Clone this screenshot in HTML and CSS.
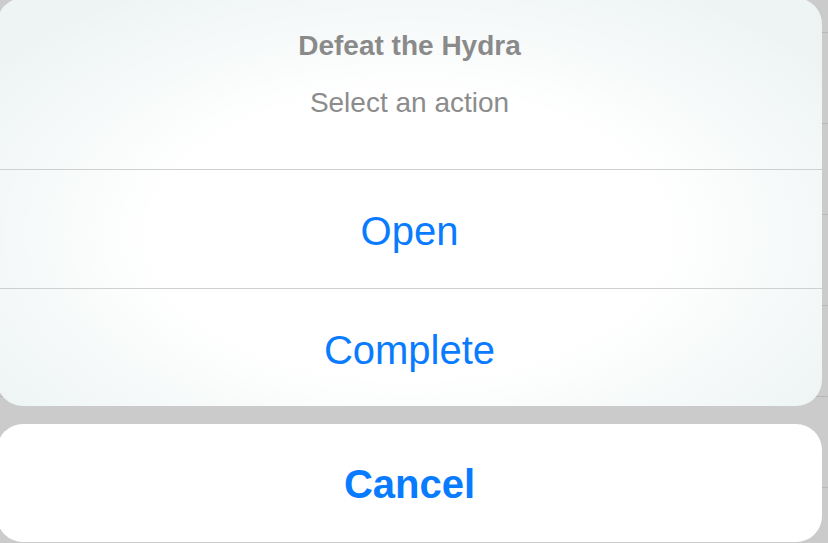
FILE: index.html
```html
<!DOCTYPE html>
<html lang="en">
<head>
<meta charset="utf-8">
<title>Action sheet</title>
<link rel="stylesheet" href="styles.css">
</head>
<body>
<div class="screen">
  <div class="sheet">
    <div class="sheet-header">
      <div class="sheet-title">Defeat the Hydra</div>
      <div class="sheet-message">Select an action</div>
    </div>
    <button class="sheet-action">Open</button>
    <button class="sheet-action">Complete</button>
  </div>
  <button class="cancel">Cancel</button>
</div>
</body>
</html>
```

FILE: styles.css
```css
html, body {
  margin: 0;
  padding: 0;
}
body {
  width: 828px;
  height: 543px;
  overflow: hidden;
  background-color: #cbcbcb;
  background-image: repeating-linear-gradient(to bottom,
    transparent 0, transparent 32px,
    #b8b8b8 32px, #b8b8b8 33px,
    transparent 33px, transparent 91px);
  font-family: "Liberation Sans", Arial, sans-serif;
}
.screen {
  display: flex;
  flex-direction: column;
  gap: 18px;
  width: 825px;
  margin: -2px 0 0 -3px;
}
.sheet {
  display: flex;
  flex-direction: column;
  border-radius: 26px;
  overflow: hidden;
  background-color: #eef4f4;
  background-image: radial-gradient(ellipse 62% 70% at 50% 58%, #ffffff 50%, rgba(255,255,255,0) 100%);
}
.sheet-header {
  height: 172px;
  box-sizing: border-box;
  padding-top: 32px;
  display: flex;
  flex-direction: column;
  align-items: center;
  border-bottom: 1px solid #d0d0d0;
}
.sheet-title {
  font-size: 28px;
  font-weight: bold;
  line-height: 32px;
  color: #8a8a8a;
}
.sheet-message {
  margin-top: 25px;
  font-size: 28px;
  line-height: 32px;
  color: #8c8c8c;
}
.sheet-action {
  height: 118px;
  border: 0;
  background: transparent;
  font-family: inherit;
  font-size: 40px;
  color: #087bff;
  padding: 5px 0 0;
  cursor: pointer;
}
.sheet-action + .sheet-action {
  border-top: 1px solid #d0d0d0;
}
.cancel {
  height: 118px;
  border: 0;
  border-radius: 26px;
  background: #ffffff;
  font-family: inherit;
  font-size: 40px;
  font-weight: bold;
  color: #087bff;
  padding: 2px 0 0;
  cursor: pointer;
}
```
